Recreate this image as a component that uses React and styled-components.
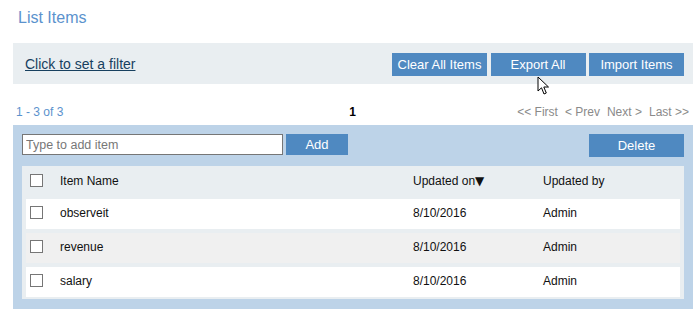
import React from "react";
import styled, { createGlobalStyle } from "styled-components";

const GlobalStyle = createGlobalStyle`
  body {
    margin: 0;
    background: #fff;
    font-family: "Liberation Sans", Arial, sans-serif;
  }
`;

const Page = styled.div`
  position: relative;
  width: 699px;
  padding: 8px 6px 0 13px;
  box-sizing: border-box;
`;

const Title = styled.h1`
  margin: 0 0 15px 5px;
  font-size: 16px;
  line-height: 20px;
  font-weight: 400;
  color: #5b92cd;
`;

const FilterBar = styled.div`
  display: flex;
  align-items: center;
  height: 41px;
  padding: 1px 9px 0 12px;
  box-sizing: border-box;
  background: #e9eef1;
`;

const FilterLink = styled.a`
  font-size: 14px;
  color: #17405f;
  text-decoration: underline;
  cursor: pointer;
`;

const ButtonGroup = styled.div`
  display: flex;
  gap: 3.5px;
  margin-left: auto;
`;

const Button = styled.button`
  display: block;
  width: ${({ $width }) => $width || 95}px;
  height: ${({ $height }) => $height || 23}px;
  padding: 0;
  border: none;
  background: #4f89c1;
  color: #fff;
  font-family: "Liberation Sans", Arial, sans-serif;
  font-size: 13px;
  line-height: 1;
  cursor: pointer;
`;

const Pager = styled.div`
  display: grid;
  grid-template-columns: 1fr auto 1fr;
  align-items: center;
  height: 41px;
  box-sizing: border-box;
  padding: 19px 4px 4px 3px;
  font-size: 12px;
  line-height: 18px;
`;

const Count = styled.span`
  color: #5b92cd;
`;

const CurrentPage = styled.span`
  font-weight: 700;
  color: #000;
`;

const PageLinks = styled.div`
  display: flex;
  justify-content: flex-end;
  gap: 7px;
  color: #8a8a8a;
`;

const Panel = styled.div`
  padding: 9px 9px 10px 9px;
  background: #bdd3e8;
`;

const Toolbar = styled.div`
  display: flex;
  align-items: flex-start;
  gap: 3px;
  height: 23px;
  margin-bottom: 9px;
`;

const TextInput = styled.input`
  display: block;
  width: 261px;
  height: 21px;
  box-sizing: border-box;
  margin: 0;
  padding: 0 3px;
  border: 1px solid #767676;
  background: #fff;
  font-family: "Liberation Sans", Arial, sans-serif;
  font-size: 12.5px;
  outline: none;

  &::placeholder {
    color: #777;
  }
`;

const Spacer = styled.div`
  flex: 1;
`;

const Table = styled.div`
  display: flex;
  flex-direction: column;
  gap: 4px;
  padding: 0 4px 2px;
  background: #e9eef1;
`;

const Row = styled.div`
  display: grid;
  grid-template-columns: 34px 353px 130px 1fr;
  align-items: center;
  height: ${({ $head }) => ($head ? 29 : 30)}px;
  box-sizing: border-box;
  padding-bottom: ${({ $head }) => ($head ? 0 : 3)}px;
  background: ${({ $head, $alt }) =>
    $head ? "transparent" : $alt ? "#f0f0f0" : "#fff"};
  font-size: 12px;
  line-height: 14px;
  color: #111;
`;

const CheckCell = styled.div`
  display: flex;
  padding-left: 4px;
`;

const Checkbox = styled.span`
  width: 13px;
  height: 13px;
  box-sizing: border-box;
  border: 1px solid #767676;
  background: #fff;
`;

const SortArrow = styled.span`
  font-family: "DejaVu Sans", sans-serif;
  font-size: 12px;
`;

const Pointer = styled.svg`
  position: absolute;
  left: 537px;
  top: 76px;
`;

const items = [
  { name: "observeit", date: "8/10/2016", by: "Admin" },
  { name: "revenue", date: "8/10/2016", by: "Admin" },
  { name: "salary", date: "8/10/2016", by: "Admin" },
];

export default function App() {
  return (
    <Page>
      <GlobalStyle />
      <Title>List Items</Title>
      <FilterBar>
        <FilterLink>Click to set a filter</FilterLink>
        <ButtonGroup>
          <Button>Clear All Items</Button>
          <Button>Export All</Button>
          <Button>Import Items</Button>
        </ButtonGroup>
      </FilterBar>
      <Pager>
        <Count>1 - 3 of 3</Count>
        <CurrentPage>1</CurrentPage>
        <PageLinks>
          <span>&lt;&lt; First</span>
          <span>&lt; Prev</span>
          <span>Next &gt;</span>
          <span>Last &gt;&gt;</span>
        </PageLinks>
      </Pager>
      <Panel>
        <Toolbar>
          <TextInput placeholder="Type to add item" />
          <Button $width={62} $height={21}>
            Add
          </Button>
          <Spacer />
          <Button>Delete</Button>
        </Toolbar>
        <Table>
          <Row $head>
            <CheckCell>
              <Checkbox />
            </CheckCell>
            <span>Item Name</span>
            <span>
              Updated on<SortArrow>▼</SortArrow>
            </span>
            <span>Updated by</span>
          </Row>
          {items.map((item, i) => (
            <Row key={item.name} $alt={i % 2 === 1}>
              <CheckCell>
                <Checkbox />
              </CheckCell>
              <span>{item.name}</span>
              <span>{item.date}</span>
              <span>{item.by}</span>
            </Row>
          ))}
        </Table>
      </Panel>
      <Pointer width="13" height="20" viewBox="0 0 13 20">
        <path
          d="M1 1 L1 15 L4.5 11.8 L7 18 L9.3 17 L6.8 11 L11.5 11 Z"
          fill="#fff"
          stroke="#000"
          strokeWidth="1"
          strokeLinejoin="round"
        />
      </Pointer>
    </Page>
  );
}
